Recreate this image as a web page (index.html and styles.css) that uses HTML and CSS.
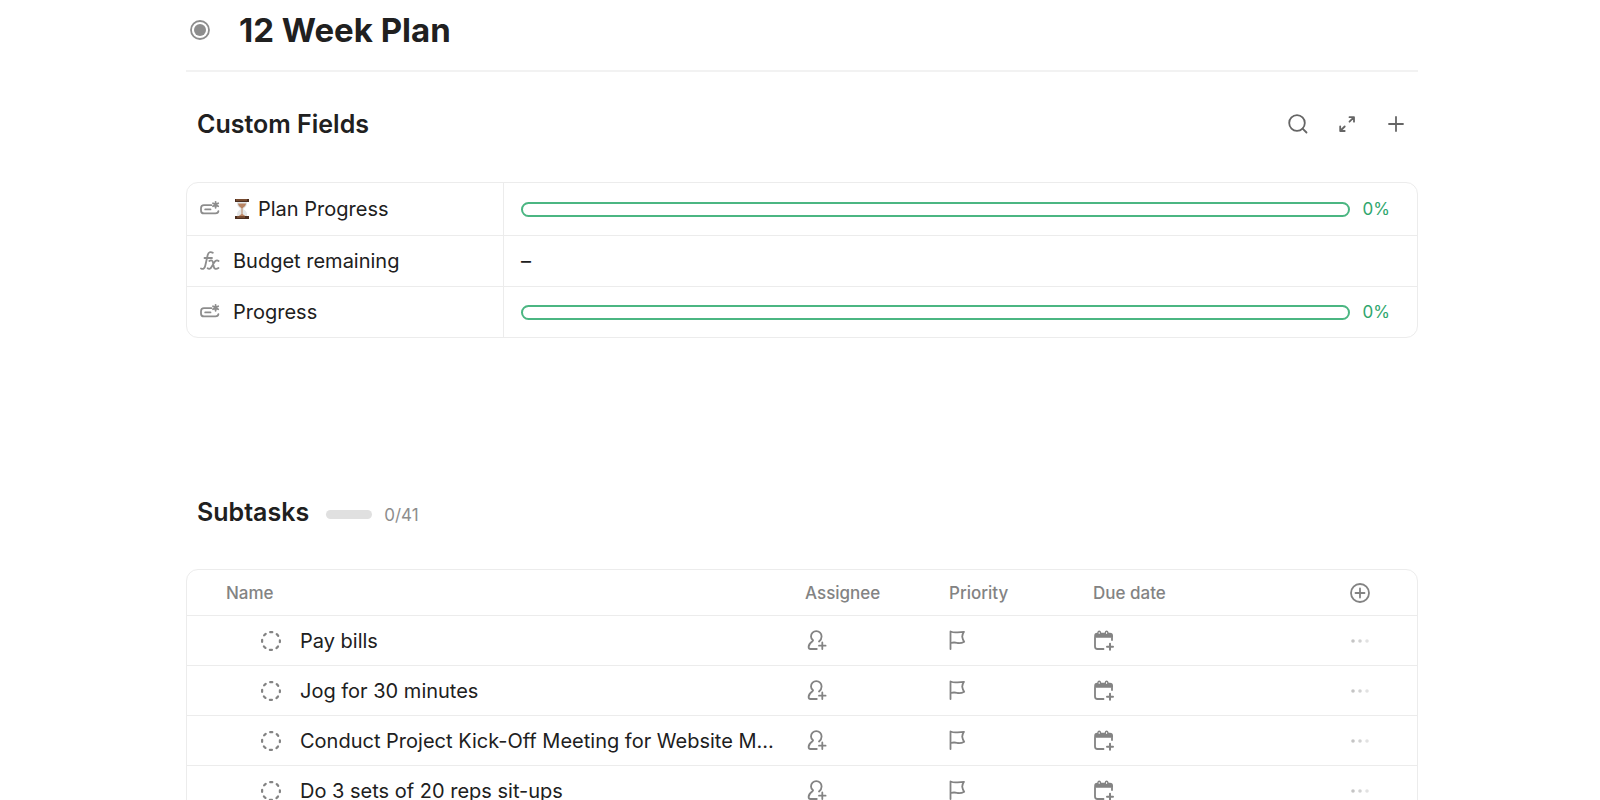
FILE: index.html
```html
<!DOCTYPE html>
<html lang="en">
<head>
    <meta charset="UTF-8">
    <title>12 Week Plan</title>
    <link rel="stylesheet" href="styles.css">
</head>
<body>
    <svg class="sprite" aria-hidden="true">
        <symbol id="icon-wildcard" viewBox="0 0 20 20">
            <path d="M11.5 6.200H4Q1 6.200 1 9.200V11.400Q1 14.400 4 14.400H15.500Q18.200 14.400 18.400 12.200M5.200 10.400H10.500"/>
            <path d="M15.600 2.800V8.800M13 4.300L18.200 7.300M18.200 4.300L13 7.300"/>
        </symbol>
        <symbol id="icon-formula" viewBox="0 0 20 20">
            <path d="M1 17.500c2.200 1.200 3.700 0 4.300-3L7.700 4C8.400 1.200 10.500.3 12.800 1.800M4.500 7h7.500"/>
            <path d="M9.300 10c2-1.500 3.500-.5 3.800 2l.6 3.500c.4 2.500 2.300 3.200 4.800 1.500M18.600 10c-1.800-1.300-3.300-.3-4.400 1.500l-2.700 4.500c-1 1.800-2.400 2.400-3.900 1.300"/>
        </symbol>
        <symbol id="icon-status" viewBox="0 0 22 22">
            <circle cx="11" cy="11" r="8.900" stroke-dasharray="2.200 4.790" stroke-dashoffset="1.100" stroke-width="2.200"/>
        </symbol>
        <symbol id="icon-assignee" viewBox="0 0 22 22">
            <path d="M14 11.500Q16.600 9.300 16.600 6.400A5.300 5.300 0 0 0 6 6.400Q6 8.300 7.800 10Q8.400 10.600 7.500 11.200Q3.600 13.800 3.600 17Q3.600 19 5.600 19H11.800"/>
            <path d="M17.300 12.400v6.600M14 15.700h6.600"/>
        </symbol>
        <symbol id="icon-flag" viewBox="0 0 22 22">
            <path d="M1.500 19V1.500Q5 2.800 8.500 2.300T15 1.800Q13.200 4.300 13.200 6.700Q13.600 9.600 15.200 11.700Q12 13.600 8.500 13Q5 12 1.800 13"/>
        </symbol>
        <symbol id="icon-date" viewBox="0 0 22 22">
            <path d="M2 8V16.500Q2 19 4.500 19H10.500M19 8V10"/>
            <path class="solid" d="M1.200 7.800V5.800Q1.200 2.800 4.200 2.800Q4.600.6 6.200.6T8.300 2.800H11.600Q12 .6 13.600.6T15.700 2.800H17Q20 2.800 20 5.800V7.800Z"/>
            <path class="hole" d="M6.200 2.500v1M13.600 2.500v1"/>
            <path d="M17 13.700v6M14 16.700h6" stroke-width="2"/>
        </symbol>
        <symbol id="icon-more" viewBox="0 0 22 22">
            <circle class="dot" cx="4" cy="11" r="1.800"/>
            <circle class="dot dot-mid" cx="11" cy="11" r="1.800"/>
            <circle class="dot dot-light" cx="18" cy="11" r="1.800"/>
        </symbol>
    </svg>

    <main class="task">
        <header class="task-header">
            <button class="icon-button" type="button" aria-label="Task type">
                <svg class="icon" viewBox="0 0 22 22"><circle cx="11" cy="11" r="9"/><circle class="solid" cx="11" cy="11" r="6"/></svg>
            </button>
            <h1>12 Week Plan</h1>
        </header>

        <section class="fields">
            <div class="section-header">
                <h2>Custom Fields</h2>
                <div class="actions">
                    <button class="icon-button" type="button" aria-label="Search">
                        <svg class="icon" viewBox="0 0 22 22"><circle cx="10" cy="10" r="7.800"/><path d="M15.600 15.600L19.500 19.500"/></svg>
                    </button>
                    <button class="icon-button" type="button" aria-label="Expand">
                        <svg class="icon" viewBox="0 0 22 22"><path d="M13.500 8.700L17.500 4.700M13.500 4.200H18V8.700M8.700 13.500L4.700 17.500M4.200 13.500V18H8.700"/></svg>
                    </button>
                    <button class="icon-button" type="button" aria-label="Add field">
                        <svg class="icon" viewBox="0 0 22 22"><path d="M11 4v14M4 11h14"/></svg>
                    </button>
                </div>
            </div>
            <table class="fields-table">
                <tbody>
                    <tr>
                        <th scope="row">
                            <div class="field-name">
                                <svg class="icon"><use href="#icon-wildcard"/></svg>
                                <svg class="hourglass" viewBox="0 0 18 22" role="img" aria-label="Hourglass">
                                    <path class="glass" d="M4 3V6Q4 8.500 7.800 11Q4 13.500 4 16V19H14V16Q14 13.500 10.200 11Q14 8.500 14 6V3Z"/>
                                    <path class="sand" d="M4.800 5.500H13.200Q13 8 9.500 10.200V16L13 18.500H5L8.500 16V10.200Q5 8 4.800 5.500Z"/>
                                    <path class="wood" d="M2 1H16V4H2ZM2 18H16V21H2Z"/>
                                    <path class="wood-light" d="M3 1.600H14V2.500H3ZM4 18.600H12V19.500H4Z"/>
                                </svg>
                                <span>Plan Progress</span>
                            </div>
                        </th>
                        <td>
                            <div class="progress">
                                <div class="progress-bar" role="progressbar" aria-label="Plan Progress" aria-valuenow="0" aria-valuemin="0" aria-valuemax="100"></div>
                                <span>0%</span>
                            </div>
                        </td>
                    </tr>
                    <tr>
                        <th scope="row">
                            <div class="field-name">
                                <svg class="icon"><use href="#icon-formula"/></svg>
                                <span>Budget remaining</span>
                            </div>
                        </th>
                        <td>–</td>
                    </tr>
                    <tr>
                        <th scope="row">
                            <div class="field-name">
                                <svg class="icon"><use href="#icon-wildcard"/></svg>
                                <span>Progress</span>
                            </div>
                        </th>
                        <td>
                            <div class="progress">
                                <div class="progress-bar" role="progressbar" aria-label="Progress" aria-valuenow="0" aria-valuemin="0" aria-valuemax="100"></div>
                                <span>0%</span>
                            </div>
                        </td>
                    </tr>
                </tbody>
            </table>
        </section>

        <section class="subtasks">
            <div class="section-header">
                <h2>Subtasks</h2>
                <div class="count">
                    <div class="count-bar"></div>
                    <span>0/41</span>
                </div>
            </div>
            <table class="subtasks-table">
                <thead>
                    <tr>
                        <th class="col-name">Name</th>
                        <th class="col-meta">Assignee</th>
                        <th class="col-meta">Priority</th>
                        <th class="col-date">Due date</th>
                        <th class="col-more">
                            <button class="icon-button" type="button" aria-label="Add column">
                                <svg class="icon" viewBox="0 0 22 22"><circle cx="11" cy="11" r="9"/><path d="M11 6.500v9M6.500 11h9"/></svg>
                            </button>
                        </th>
                    </tr>
                </thead>
                <tbody id="subtasksBody"></tbody>
            </table>
        </section>
    </main>

    <script>
        const subtasks = [
            "Pay bills",
            "Jog for 30 minutes",
            "Conduct Project Kick-Off Meeting for Website M...",
            "Do 3 sets of 20 reps sit-ups"
        ];

        const iconButton = (icon, label) =>
            `<button class="icon-button" type="button" aria-label="${label}"><svg class="icon"><use href="#icon-${icon}"/></svg></button>`;

        const rowsHtml = subtasks.map(name => `<tr>
            <td class="col-name"><div class="subtask">${iconButton("status", "Status")}<a href="#">${name}</a></div></td>
            <td>${iconButton("assignee", "Add assignee")}</td>
            <td>${iconButton("flag", "Set priority")}</td>
            <td>${iconButton("date", "Set due date")}</td>
            <td class="col-more">${iconButton("more", "More")}</td>
        </tr>`);
        document.getElementById("subtasksBody").innerHTML = rowsHtml.join("\n");
    </script>
</body>
</html>
```
FILE: styles.css
```css
* {
    box-sizing: border-box;
}

body {
    margin: 0;
    background-color: #fff;
    color: #202020;
    font-family: Inter, "Liberation Sans", sans-serif;
    font-size: 20px;
    line-height: 24px;
}

h1,
h2 {
    margin: 0;
    font-weight: 600;
}

h1 {
    font-size: 33px;
    font-weight: 700;
    line-height: 40px;
}

h2 {
    font-size: 25px;
    line-height: 32px;
}

.sprite {
    display: none;
}

.task {
    padding: 0 182px 0 186px;
}

.task-header {
    display: flex;
    align-items: center;
    gap: 28px;
    height: 72px;
    padding: 0 3px 10px;
    border-bottom: 2px solid #f2f2f2;
}

.section-header {
    display: flex;
    align-items: center;
    padding: 0 11px;
}

.fields .section-header {
    justify-content: space-between;
    padding-top: 36px;
    margin-bottom: 42px;
}

.subtasks .section-header {
    gap: 17px;
    padding-top: 158px;
    margin-bottom: 41px;
}

.actions {
    display: flex;
    gap: 27px;
    color: #656565;
}

.icon-button {
    display: block;
    padding: 0;
    border: none;
    background: none;
    color: inherit;
    cursor: pointer;
}

.task-header .icon-button {
    color: #8d8d8d;
}

.icon {
    display: block;
    flex: none;
    width: 22px;
    height: 22px;
    fill: none;
    stroke: currentColor;
    stroke-width: 1.8;
    stroke-linecap: round;
    stroke-linejoin: round;
}

.solid {
    fill: currentColor;
    stroke: none;
}

.hole {
    stroke: #fff;
    stroke-width: 1;
}

.dot {
    fill: #c4c4c4;
    stroke: none;
}

.dot-mid {
    fill: #d2d2d2;
}

.dot-light {
    fill: #e2e2e2;
}

table {
    width: 100%;
    table-layout: fixed;
    border: 1px solid #ececec;
    border-radius: 12px;
    border-spacing: 0;
}

th,
td {
    padding: 0;
    text-align: left;
}

tr + tr > *,
tbody tr:first-child > td {
    border-top: 1px solid #ececec;
}

.fields-table tr:first-child > * {
    border-top: none;
}

.fields-table tr {
    height: 51px;
}

.fields-table tr:first-child {
    height: 52px;
}

.fields-table th {
    width: 317px;
    border-right: 1px solid #ececec;
    font-weight: 400;
}

.fields-table td {
    padding: 0 27px 0 17px;
}

.field-name {
    display: flex;
    align-items: center;
    padding-left: 13px;
}

.field-name .icon {
    width: 20px;
    height: 20px;
    margin-right: 13px;
    color: #8d8d8d;
}

.hourglass {
    width: 18px;
    height: 22px;
    margin-right: 7px;
}

.glass {
    fill: #e4e7e8;
}

.sand {
    fill: #b88463;
}

.wood {
    fill: #4b2e20;
}

.wood-light {
    fill: #a36840;
}

.progress {
    display: flex;
    align-items: center;
    gap: 13px;
    color: #2fa66d;
    font-size: 17px;
}

.progress-bar {
    flex: 1;
    height: 15px;
    border: 2px solid #4bb682;
    border-radius: 8px;
}

.count {
    display: flex;
    align-items: center;
    gap: 12px;
    padding-top: 5px;
    color: #8d8d8d;
    font-size: 17px;
}

.count-bar {
    width: 46px;
    height: 9px;
    border-radius: 5px;
    background-color: #e0e0e0;
}

.subtasks-table {
    color: #838383;
}

.subtasks-table tr {
    height: 50px;
}

.subtasks-table thead tr {
    height: 45px;
}

.subtasks-table th {
    font-size: 17px;
    font-weight: 500;
}

.subtasks-table th.col-name {
    padding-left: 39px;
}

.subtasks-table td.col-name {
    padding: 0 28px 0 73px;
}

.col-meta {
    width: 144px;
}

.col-date {
    width: 210px;
}

.col-more {
    width: 114px;
}

.col-more .icon-button {
    margin: 0 auto;
}

.subtask {
    display: flex;
    align-items: center;
    gap: 18px;
}

.subtask a {
    overflow: hidden;
    color: #202020;
    text-decoration: none;
    text-overflow: ellipsis;
    white-space: nowrap;
}
```
